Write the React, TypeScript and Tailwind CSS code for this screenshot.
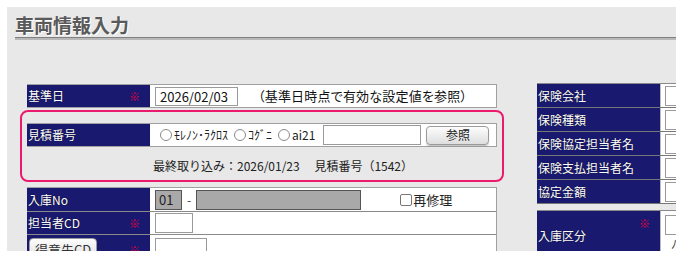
import React from "react";

const FONT = "font-['Noto_Sans_CJK_JP','Noto_Sans',sans-serif]";

function Label({ text, req, children }: { text?: string; req?: boolean; children?: React.ReactNode }) {
  return (
    <div className="w-[123px] shrink-0 bg-[#191970] text-white text-[12px] flex items-center pl-[1px] relative">
      {children ?? <span className="[text-shadow:0_0_1px_#000]">{text}</span>}
      {req && <span className="absolute left-[102px] top-1/2 -translate-y-1/2 text-[#e0003a] text-[11px]">※</span>}
    </div>
  );
}

function Box({ w, cls = "" }: { w: string; cls?: string }) {
  return <div className={`${w} h-[20px] border border-[#9a9a9a] bg-white ${cls}`} />;
}

function Radio({ label }: { label: string }) {
  return (
    <span className="flex items-center mr-[6px]">
      <span className="inline-block w-[12px] h-[12px] rounded-full border border-[#8a8a8a] bg-white mr-[2px]" />
      <span className="text-[12px] text-[#222]">{label}</span>
    </span>
  );
}

export default function App() {
  return (
    <div className={`w-[688px] h-[261px] bg-white pt-[7px] pl-[7px] ${FONT}`}>
      <div className="w-[669px] h-[244px] bg-[#e8e8e8] overflow-hidden">
        <div className="pl-[8px] pt-[6px]">
          <div className="text-[19px] font-bold leading-[24px] text-[#5a5a5a] [text-shadow:1px_1px_0_#fff]">車両情報入力</div>
          <div className="h-[1px] bg-[#808080]" />
          <div className="h-[2px] bg-[#b8b8b8]" />
        </div>

        <div className="flex items-start pl-[13px] mt-[43px]">
          {/* left column */}
          <div className="w-[484px] shrink-0 pt-[1px]">
            <div className="mx-[7px] flex h-[24px] border-t border-b border-r border-[#a0a0a0]">
              <Label text="基準日" req />
              <div className="flex-1 bg-white flex items-center pl-[5px] text-[13px] text-[#111]">
                <div className="w-[83px] h-[19px] border border-[#9a9a9a] flex items-center pl-[4px] leading-none">2026/02/03</div>
                <span className="ml-[20px] [font-feature-settings:'palt'] tracking-[0.2px]">（基準日時点で有効な設定値を参照）</span>
              </div>
            </div>

            <div className="mt-[2px] h-[72px] border-2 border-[#ec1a6c] rounded-[8px] px-[5px] pt-[11px]">
              <div className="flex h-[24px] border-t border-b border-r border-[#a0a0a0]">
                <Label text="見積番号" />
                <div className="flex-1 bg-white flex items-center pl-[10px]">
                  <Radio label="ﾓﾚﾉﾝ･ﾗｸﾛｽ" />
                  <Radio label="ｺｸﾞﾆ" />
                  <Radio label="ai21" />
                  <div className="w-[98px] h-[20px] border border-[#9a9a9a] bg-white ml-[2px]" />
                  <button className="ml-[5px] w-[63px] h-[19px] rounded-[4px] border border-[#9a9a9a] bg-[linear-gradient(#fdfdfd,#dedede)] text-[12px] text-[#222] leading-none shadow-[0_1px_1px_rgba(0,0,0,0.25)]">参照</button>
                </div>
              </div>
              <div className="mt-[9px] pl-[126px] text-[12px] leading-[20px] text-[#222]">
                最終取り込み：2026/01/23　 見積番号（1542）
              </div>
            </div>

            <div className="mx-[7px] mt-[5px] border-t border-r border-[#a0a0a0]">
              <div className="flex h-[24px] border-b border-[#8a8a8a]">
                <Label text="入庫No" />
                <div className="flex-1 bg-white flex items-center pl-[5px]">
                  <div className="w-[27px] h-[20px] border border-[#555] bg-[#a9a9a9] text-[13px] leading-[18px] pl-[3px] text-[#222]">01</div>
                  <span className="mx-[5px] text-[12px] text-[#333]">-</span>
                  <div className="w-[165px] h-[20px] border border-[#555] bg-[#a9a9a9]" />
                  <span className="ml-[39px] flex items-center text-[13px] text-[#222]">
                    <span className="inline-block w-[12px] h-[12px] border border-[#777] rounded-[2px] bg-white mr-[1px]" />
                    再修理
                  </span>
                </div>
              </div>
              <div className="flex h-[23px] border-b border-[#8a8a8a]">
                <Label text="担当者CD" req />
                <div className="flex-1 bg-white flex items-center pl-[5px]">
                  <Box w="w-[38px]" />
                </div>
              </div>
              <div className="flex h-[30px]">
                <Label req>
                  <button className="ml-[1px] mt-[3px] self-start w-[68px] h-[22px] rounded-[4px] border border-[#9a9a9a] bg-[linear-gradient(#fdfdfd,#dedede)] text-[13px] text-[#333] leading-none">得意先CD</button>
                </Label>
                <div className="flex-1 bg-white flex items-start pl-[5px] pt-[3px]">
                  <Box w="w-[52px]" />
                </div>
              </div>
            </div>
          </div>

          {/* right column */}
          <div className="ml-[33px] w-[200px] shrink-0">
            <div className="border-t border-[#8a8a8a]">
              {["保険会社", "保険種類", "保険協定担当者名", "保険支払担当者名", "協定金額"].map((t) => (
                <div key={t} className="flex h-[24px] border-b border-[#777]">
                  <Label text={t} />
                  <div className="flex-1 bg-white border-l border-[#bbb] flex items-center pl-[4px]">
                    <Box w="w-[60px]" />
                  </div>
                </div>
              ))}
            </div>
            <div className="mt-[6px] flex h-[60px] border-t border-[#8a8a8a]">
              <div className="w-[123px] shrink-0 bg-[#191970] text-white text-[12px] relative pl-[1px]">
                <span className="absolute left-[1px] top-[16px] [text-shadow:0_0_1px_#000]">入庫区分</span>
                <span className="absolute left-[102px] top-[4px] text-[#e0003a] text-[11px]">※</span>
              </div>
              <div className="flex-1 bg-white border-l border-[#bbb] pl-[4px] pt-[4px]">
                <Box w="w-[60px]" />
                <div className="mt-[3px] ml-[6px] text-[12px] text-[#333] leading-none">ﾉ</div>
              </div>
            </div>
          </div>
        </div>
      </div>
    </div>
  );
}
